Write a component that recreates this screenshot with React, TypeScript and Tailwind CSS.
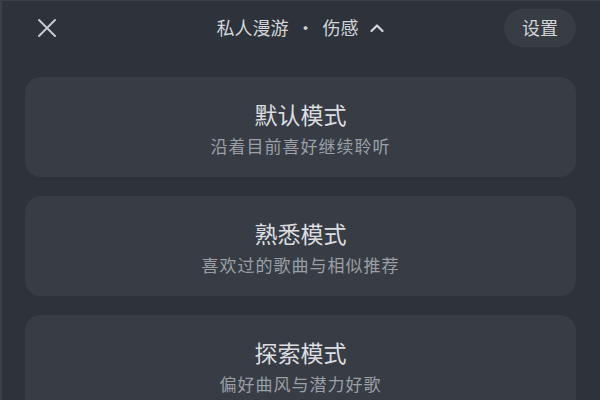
import React from "react";

const modes = [
  { title: "默认模式", desc: "沿着目前喜好继续聆听" },
  { title: "熟悉模式", desc: "喜欢过的歌曲与相似推荐" },
  { title: "探索模式", desc: "偏好曲风与潜力好歌" },
];

export default function App() {
  return (
    <div
      className="w-[600px] h-[400px] overflow-hidden bg-[#2e333b] border-l-2 border-t border-[#3c4149] flex flex-col"
      style={{ fontFamily: '"Noto Sans CJK SC", "Noto Sans", sans-serif' }}
    >
      {/* Header */}
      <div className="h-[53px] shrink-0 grid grid-cols-[1fr_auto_1fr] items-center pl-[34px] pr-[24px]">
        <button className="w-[22px] h-[22px] flex items-center justify-center text-[#c6c9ce]">
          <svg width="20" height="20" viewBox="0 0 20 20" fill="none">
            <path d="M2 2L18 18M18 2L2 18" stroke="currentColor" strokeWidth="2" strokeLinecap="round" />
          </svg>
        </button>
        <div className="flex items-center text-[18px] text-[#d2d4d8] pr-[12px]">
          <span>私人漫游</span>
          <span className="mx-[8px]">·</span>
          <span>伤感</span>
          <svg className="ml-[11px]" width="14" height="10" viewBox="0 0 14 10" fill="none">
            <path d="M1.5 8L7 2.5L12.5 8" stroke="currentColor" strokeWidth="2.2" strokeLinecap="round" strokeLinejoin="round" />
          </svg>
        </div>
        <div className="flex justify-end">
          <button className="w-[72px] h-[38px] rounded-full bg-[#383d45] text-[18px] text-[#d2d4d8] flex items-center justify-center">
            设置
          </button>
        </div>
      </div>

      {/* Mode cards */}
      <div className="flex flex-col gap-[19px] pl-[23px] pr-[24px] pt-[23px]">
        {modes.map((m) => (
          <div
            key={m.title}
            className="h-[100px] shrink-0 rounded-[16px] bg-[#383d45] flex flex-col items-center pt-[21px]"
          >
            <div className="text-[23px] leading-[32px] text-[#dcdde0]">{m.title}</div>
            <div className="mt-[4px] text-[17px] leading-[24px] tracking-[1px] text-[#9b9fa6]">{m.desc}</div>
          </div>
        ))}
      </div>
    </div>
  );
}
